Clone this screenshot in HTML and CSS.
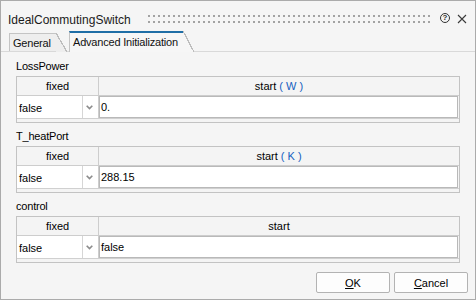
FILE: index.html
```html
<!DOCTYPE html>
<html>
<head>
<meta charset="utf-8">
<link rel="stylesheet" href="styles.css">
</head>
<body>
<div class="window">
  <div class="titlebar">
    <span class="title">IdealCommutingSwitch</span>
    <svg class="grip" height="8"><defs><pattern id="dots" width="5" height="6" patternUnits="userSpaceOnUse"><rect width="2" height="2" fill="#a3a3a3"/></pattern></defs><rect width="100%" height="8" fill="url(#dots)"/></svg>
    <span class="help">?</span>
    <svg class="close" width="10" height="10" viewBox="0 0 10 10"><path d="M1 1 L9 9 M9 1 L1 9" stroke="#3a3a3a" stroke-width="1.1" fill="none"/></svg>
  </div>
  <div class="tabbar">
    <div class="tab tab-general">General</div>
    <div class="tab tab-active">Advanced Initialization</div>
  </div>
  <div class="pane">
    <div class="section">
      <div class="label">LossPower</div>
      <div class="grid">
        <div class="ghead"><div class="hfix">fixed</div><div class="hstart">start <span class="unit">( W )</span></div></div>
        <div class="grow"><div class="fixcell"><div class="selval">false</div><div class="arrow"><svg width="7" height="5" viewBox="0 0 7 5"><path d="M0.7 0.7 L3.5 3.6 L6.3 0.7" stroke="#8c8c8c" stroke-width="1.6" fill="none"/></svg></div></div><div class="val">0.</div></div>
      </div>
    </div>
    <div class="section">
      <div class="label">T_heatPort</div>
      <div class="grid">
        <div class="ghead"><div class="hfix">fixed</div><div class="hstart">start <span class="unit">( K )</span></div></div>
        <div class="grow"><div class="fixcell"><div class="selval">false</div><div class="arrow"><svg width="7" height="5" viewBox="0 0 7 5"><path d="M0.7 0.7 L3.5 3.6 L6.3 0.7" stroke="#8c8c8c" stroke-width="1.6" fill="none"/></svg></div></div><div class="val">288.15</div></div>
      </div>
    </div>
    <div class="section">
      <div class="label">control</div>
      <div class="grid">
        <div class="ghead"><div class="hfix">fixed</div><div class="hstart">start</div></div>
        <div class="grow"><div class="fixcell"><div class="selval">false</div><div class="arrow"><svg width="7" height="5" viewBox="0 0 7 5"><path d="M0.7 0.7 L3.5 3.6 L6.3 0.7" stroke="#8c8c8c" stroke-width="1.6" fill="none"/></svg></div></div><div class="val">false</div></div>
      </div>
    </div>
  </div>
  <div class="footer">
    <button class="btn"><u>O</u>K</button>
    <button class="btn"><u>C</u>ancel</button>
  </div>
</div>
</body>
</html>
```
FILE: styles.css
```css
* { box-sizing: border-box; }
html, body { margin: 0; padding: 0; }
body {
  width: 476px;
  height: 300px;
  font-family: "Liberation Sans", Arial, sans-serif;
  color: #000;
}
.window {
  width: 476px;
  height: 300px;
  border: 1px solid #ababab;
  background: #f5f5f5;
  display: flex;
  flex-direction: column;
}
.titlebar {
  height: 30px;
  flex: none;
  display: flex;
  align-items: flex-start;
  padding: 0 8px 0 7px;
}
.title {
  font-size: 12px;
  line-height: 14px;
  margin-top: 12px;
  color: #1a1a1a;
}
.grip {
  flex: 1;
  margin: 14px 8px 0 17px;
  height: 8px;
}
.help {
  width: 10px;
  height: 10px;
  margin-top: 12px;
  border: 1px solid #333;
  border-radius: 50%;
  font-size: 8px;
  line-height: 8px;
  text-align: center;
  font-weight: bold;
  color: #333;
}
.close {
  margin: 13px 0 0 7px;
}
.tabbar {
  height: 21px;
  flex: none;
  display: flex;
  align-items: flex-end;
  padding-left: 8px;
  border-bottom: 1px solid #d9d9d9;
}
.tab {
  position: relative;
  font-size: 11px;
  line-height: 13px;
  letter-spacing: -0.2px;
  white-space: nowrap;
  border-left: 1px solid #c4c4c4;
  padding: 3px 0 0 3px;
  color: #111;
}
.tab::after {
  content: "";
  position: absolute;
  left: 100%;
  width: 11px;
}
.tab-general {
  width: 47px;
  height: 18px;
  background: #eeeeee;
  border-top: 1px solid #c4c4c4;
}
.tab-general::after {
  top: -1px;
  height: 19px;
  background: linear-gradient(to top right, #eeeeee calc(50% - 0.6px), #bdbdbd calc(50% - 0.6px), #bdbdbd calc(50% + 0.6px), transparent calc(50% + 0.6px));
}
.tab-active {
  width: 114px;
  height: 21px;
  margin-left: 13px;
  margin-bottom: -1px;
  background: #f6f6f6;
  border-top: 2px solid #1f6ea6;
}
.tab-active::after {
  top: -2px;
  height: 21px;
  background: linear-gradient(to top right, #f6f6f6 calc(50% - 0.6px), #bdbdbd calc(50% - 0.6px), #bdbdbd calc(50% + 0.6px), transparent calc(50% + 0.6px));
}
.pane {
  padding: 8px 15px 0 15px;
  display: flex;
  flex-direction: column;
  gap: 7px;
}
.section {
  display: flex;
  flex-direction: column;
}
.label {
  font-size: 11px;
  line-height: 13px;
  height: 13px;
  letter-spacing: -0.2px;
  margin-bottom: 3px;
}
.grid {
  height: 47px;
  border: 1px solid #c3c3c3;
  background: #f4f4f4;
  font-size: 11px;
}
.ghead {
  display: flex;
  height: 19px;
  border-bottom: 1px solid #cdcdcd;
  line-height: 18px;
}
.hfix {
  width: 82px;
  border-right: 1px solid #cdcdcd;
  text-align: center;
}
.hstart {
  flex: 1;
  text-align: center;
}
.unit { color: #1560c0; }
.grow {
  display: flex;
  height: 23px;
  border-bottom: 1px solid #d0d0d0;
}
.fixcell {
  width: 82px;
  display: flex;
  border-right: 1px solid #cdcdcd;
}
.selval {
  flex: 1;
  background: #fff;
  border-right: 1px solid #d6d6d6;
  padding: 2px 0 0 2px;
  line-height: 20px;
}
.arrow {
  width: 15px;
  background: #fff;
  display: flex;
  align-items: center;
  justify-content: center;
  padding-right: 2px;
}
.val {
  flex: 1;
  margin: 0 1px 0 0;
  background: #fff;
  border: 1px solid #b9b9b9;
  padding: 1px 0 0 1px;
  line-height: 19px;
}
.footer {
  margin-top: auto;
  display: flex;
  justify-content: flex-end;
  gap: 4px;
  padding: 0 7px 6px 0;
}
.btn {
  width: 74px;
  height: 21px;
  border: 1px solid #b3b3b3;
  border-radius: 2px;
  background: #fdfdfd;
  font-family: "Liberation Sans", Arial, sans-serif;
  font-size: 11px;
  color: #000;
  padding: 0;
}
```
